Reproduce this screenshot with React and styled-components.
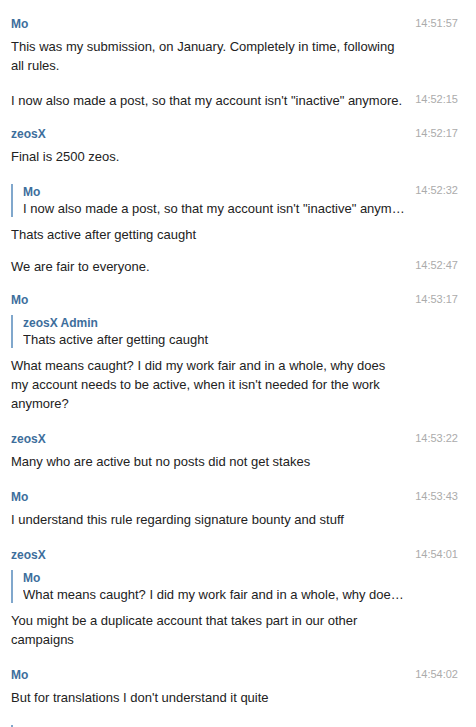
import styled, { createGlobalStyle } from "styled-components";

const messages = [
  {
    from: "Mo",
    time: "14:51:57",
    text: "This was my submission, on January. Completely in time, following all rules.",
  },
  {
    time: "14:52:15",
    text: 'I now also made a post, so that my account isn\'t "inactive" anymore.',
  },
  { from: "zeosX", time: "14:52:17", text: "Final is 2500 zeos." },
  {
    time: "14:52:32",
    reply: {
      from: "Mo",
      text: 'I now also made a post, so that my account isn\'t "inactive" anymore.',
    },
    text: "Thats active after getting caught",
  },
  { time: "14:52:47", text: "We are fair to everyone." },
  {
    from: "Mo",
    time: "14:53:17",
    reply: { from: "zeosX Admin", text: "Thats active after getting caught" },
    text: "What means caught? I did my work fair and in a whole, why does my account needs to be active, when it isn't needed for the work anymore?",
  },
  {
    from: "zeosX",
    time: "14:53:22",
    text: "Many who are active but no posts did not get stakes",
  },
  {
    from: "Mo",
    time: "14:53:43",
    text: "I understand this rule regarding signature bounty and stuff",
  },
  {
    from: "zeosX",
    time: "14:54:01",
    reply: {
      from: "Mo",
      text: "What means caught? I did my work fair and in a whole, why does my account needs to be active, when it isn't needed for the work anymore?",
    },
    text: "You might be a duplicate account that takes part in our other campaigns",
  },
  {
    from: "Mo",
    time: "14:54:02",
    text: "But for translations I don't understand it quite",
  },
  {
    time: "14:54:10",
    reply: {
      from: "zeosX",
      text: "You might be a duplicate account that takes part in our other campaigns",
    },
    text: "Maybe the same rule applies everywhere",
  },
];

function App() {
  return (
    <>
      <GlobalStyle />
      <History>
        {messages.map((m, i) => (
          <Message key={i} joined={!m.from}>
            <Body>
              {m.from && <FromName>{m.from}</FromName>}
              {m.reply && (
                <Reply>
                  <ReplyName>{m.reply.from}</ReplyName>
                  <ReplyText>{m.reply.text}</ReplyText>
                </Reply>
              )}
              <Text>{m.text}</Text>
            </Body>
            <Time>{m.time}</Time>
          </Message>
        ))}
      </History>
    </>
  );
}

const GlobalStyle = createGlobalStyle`
  html, body {
    margin: 0;
    padding: 0;
    background: #ffffff;
  }
  body {
    font-family: "Liberation Sans", Arial, sans-serif;
    color: #222222;
  }
`;

const History = styled.div`
  height: 100vh;
  overflow: hidden;
  padding-top: 7.5px;
  box-sizing: border-box;
`;

const Message = styled.div.withConfig({
  shouldForwardProp: (prop) => prop !== "joined",
})`
  display: flex;
  align-items: flex-start;
  padding: ${({ joined }) => (joined ? "6.5px 18px 7px 11px" : "7.5px 18px 9.5px 11px")};
`;

const Body = styled.div`
  flex: 1;
  min-width: 0;
`;

const FromName = styled.div`
  font-size: 12px;
  font-weight: 700;
  line-height: 18px;
  color: #3d6e9c;
  padding-bottom: 4px;
`;

const Reply = styled.div`
  margin: 2px -4px 8px 0;
  padding-left: 10px;
  border-left: 2px solid #80a7cc;
`;

const ReplyName = styled.div`
  font-size: 12px;
  font-weight: 700;
  line-height: 16px;
  color: #3d6e9c;
`;

const ReplyText = styled.div`
  font-size: 13px;
  line-height: 17px;
  white-space: nowrap;
  overflow: hidden;
  text-overflow: ellipsis;
`;

const Text = styled.div`
  font-size: 13px;
  line-height: 19px;
`;

const Time = styled.div`
  flex: none;
  margin-left: 11px;
  font-size: 11px;
  line-height: 16px;
  color: #ababab;
`;

export default App;
